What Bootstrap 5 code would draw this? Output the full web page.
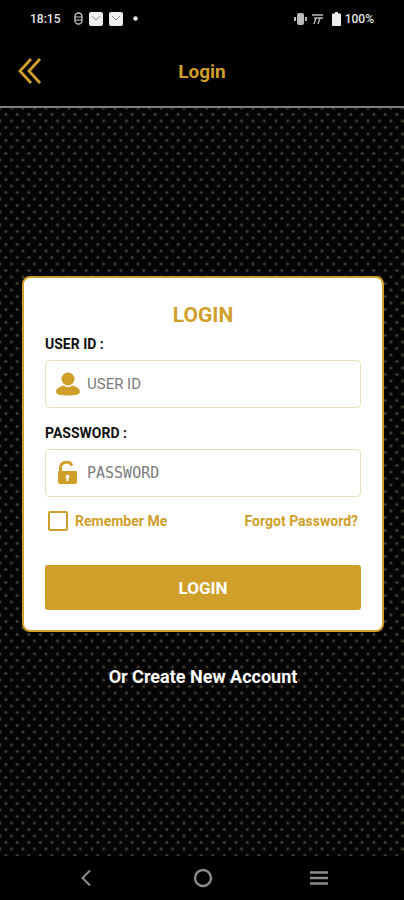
<!DOCTYPE html>
<html lang="en">
<head>
    <meta charset="UTF-8">
    <meta name="viewport" content="width=device-width, initial-scale=1.0">
    <title>Login</title>
    <link href="https://cdn.jsdelivr.net/npm/bootstrap@5.3.0/dist/css/bootstrap.min.css" rel="stylesheet">
    <style>
        body {
            background-color: #000;
            font-family: Roboto, "Liberation Sans", sans-serif;
            height: 900px;
            overflow: hidden;
        }
        .status-row {
            height: 36px;
            padding: 1px 30px 0 30px;
            color: #e6e6e6;
            font-size: 12px;
            font-weight: 500;
        }
        .status-left {
            gap: 6px;
        }
        .top-bar {
            height: 70px;
            padding: 2px 18px 0 18px;
        }
        .top-bar h1 {
            color: #d09f2a;
            font-size: 19px;
            font-weight: 700;
            margin: 0;
        }
        .back-arrow {
            left: 17px;
        }
        .top-line {
            height: 2px;
            background-color: #7d7d7d;
        }
        .dot-area {
            height: 748px;
            background-color: #040404;
            background-image:
                radial-gradient(circle, #5c5540 0, #37332a 1px, transparent 2.2px),
                radial-gradient(circle, #5c5540 0, #37332a 1px, transparent 2.2px);
            background-size: 11.5px 13px;
            background-position: 0 0, 5.75px 6.5px;
            padding: 168px 20px 0 22px;
        }
        .login-box {
            height: 356px;
            background-color: #fff;
            border: 2px solid #d09f2a;
            border-radius: 8px;
            padding: 25px 21px 0 21px;
        }
        .login-box h2 {
            color: #d09f2a;
            font-size: 21px;
            font-weight: 700;
            line-height: 24px;
            margin: 0 0 9px 0;
        }
        .field-label {
            color: #111;
            font-size: 14px;
            font-weight: 700;
            line-height: 16px;
            margin-bottom: 8px;
            display: block;
        }
        .field-wrap {
            height: 48px;
            border: 1.5px solid #eadfba;
            border-radius: 4px;
            padding-left: 10px;
            margin-bottom: 17px;
            gap: 7px;
        }
        .field-wrap.last-field {
            margin-bottom: 14px;
        }
        .field-wrap input {
            border: 0;
            outline: 0;
            width: 100%;
            padding: 0;
            font-family: Roboto, "Liberation Sans", sans-serif;
            font-size: 15px;
            color: #555;
            background: transparent;
        }
        .field-wrap input[type="password"] {
            font-family: "DejaVu Sans Mono", "Liberation Mono", monospace;
            padding-top: 1px;
        }
        .field-wrap input::placeholder {
            color: #7b7b7b;
            opacity: 1;
        }
        .field-icon {
            width: 24px;
            flex: none;
        }
        .tick-box {
            width: 20px;
            height: 20px;
            border: 2px solid #d09f2a;
            border-radius: 2px;
            margin-left: 3px;
        }
        .remember-wrap {
            gap: 7px;
        }
        .gold-link {
            color: #d09f2a;
            font-size: 14px;
            font-weight: 700;
            line-height: 20px;
            text-decoration: none;
        }
        .check-row {
            height: 20px;
            margin-bottom: 34px;
            padding-right: 3px;
        }
        .btn-gold {
            display: block;
            width: 100%;
            height: 45px;
            padding-top: 3px;
            background-color: #d09f2a;
            border: 0;
            border-radius: 3px;
            color: #fff;
            font-size: 17px;
            font-weight: 700;
        }
        .create-link {
            display: block;
            color: #fff;
            font-size: 18px;
            font-weight: 700;
            line-height: 20px;
            margin-top: 35px;
            text-align: center;
            text-decoration: none;
        }
        .nav-row {
            height: 44px;
            padding: 0 75px 0 80px;
        }
    </style>
</head>
<body>
    <div class="status-row d-flex align-items-center justify-content-between">
        <div class="status-left d-flex align-items-center">
            <span class="me-2">18:15</span>
            <svg width="9" height="13" viewBox="0 0 9 13"><rect x="1" y="1" width="7" height="11" rx="3.5" fill="none" stroke="#ccc" stroke-width="1.3"/><path d="M1 5h7M1 8h7" stroke="#ccc"/></svg>
            <svg width="14" height="14" viewBox="0 0 14 14"><rect width="14" height="14" rx="2" fill="#eee"/><path d="M3 4l4 4 4-4" fill="none" stroke="#888"/></svg>
            <svg width="14" height="14" viewBox="0 0 14 14"><rect width="14" height="14" rx="2" fill="#eee"/><path d="M3 4l4 4 4-4" fill="none" stroke="#888"/></svg>
            <svg class="ms-1" width="5" height="5" viewBox="0 0 5 5"><circle cx="2.500" cy="2.500" r="2.200" fill="#eee"/></svg>
        </div>
        <div class="d-flex align-items-center gap-1">
            <svg width="13" height="12" viewBox="0 0 13 12"><rect x="3" y="0" width="7" height="12" rx="2" fill="#bbb"/><rect x="0" y="4" width="2" height="4" fill="#bbb"/><rect x="11" y="4" width="2" height="4" fill="#bbb"/></svg>
            <svg width="13" height="12" viewBox="0 0 13 12"><path d="M1 2h11M3 5h9M5 5l-2 6M9 5l-2 6" stroke="#bbb" stroke-width="1.400" fill="none"/></svg>
            <svg width="9" height="14" viewBox="0 0 9 14" class="ms-1"><path d="M3 0h3v1.500h2a1 1 0 0 1 1 1V13a1 1 0 0 1-1 1H1a1 1 0 0 1-1-1V2.500a1 1 0 0 1 1-1h2z" fill="#eee"/></svg>
            <span>100%</span>
        </div>
    </div>

    <div class="top-bar position-relative d-flex align-items-center justify-content-center">
        <svg class="back-arrow position-absolute top-50 translate-middle-y" width="25" height="28" viewBox="0 0 25 28" fill="none" stroke="#d09f2a" stroke-width="2.800"><path d="M14 2L3 14l11 12M23 2L12 14l11 12"/></svg>
        <h1>Login</h1>
    </div>
    <div class="top-line"></div>

    <div class="dot-area">
        <div class="login-box">
            <h2 class="text-center">LOGIN</h2>
            <label class="field-label" for="userId">USER ID :</label>
            <div class="field-wrap d-flex align-items-center">
                <svg class="field-icon" height="24" viewBox="0 0 24 24" fill="#d09f2a"><circle cx="12" cy="7" r="6.500"/><path d="M0 20c0-4 5-6 8-6.500 2 2 6 2 8 0 3 .5 8 2.500 8 6.500 0 2.500-5 3.500-12 3.500S0 22.500 0 20z"/></svg>
                <input id="userId" type="text" placeholder="USER ID">
            </div>
            <label class="field-label" for="userPass">PASSWORD :</label>
            <div class="field-wrap last-field d-flex align-items-center">
                <svg class="field-icon" height="24" viewBox="0 0 24 24"><path d="M4.500 11V7a6 6 0 0 1 11.500-2.300" fill="none" stroke="#d09f2a" stroke-width="3"/><path fill="#d09f2a" fill-rule="evenodd" d="M3 10h17a1 1 0 0 1 1 1v10a2 2 0 0 1-2 2H4a2 2 0 0 1-2-2V11a1 1 0 0 1 1-1zM11.500 13.500a2 2 0 0 0-1 3.700V20h2v-2.800a2 2 0 0 0-1-3.700z"/></svg>
                <input id="userPass" type="password" placeholder="PASSWORD">
            </div>
            <div class="check-row d-flex align-items-center justify-content-between">
                <div class="remember-wrap d-flex align-items-center">
                    <span class="tick-box"></span>
                    <span class="gold-link">Remember Me</span>
                </div>
                <a href="#" class="gold-link">Forgot Password?</a>
            </div>
            <button type="button" class="btn-gold">LOGIN</button>
        </div>
        <a href="#" class="create-link">Or Create New Account</a>
    </div>

    <div class="nav-row d-flex align-items-center justify-content-between">
        <svg width="16" height="18" viewBox="0 0 16 18" fill="none" stroke="#8c8c8c" stroke-width="2"><path d="M10 1.500L2.500 9l7.500 7.500"/></svg>
        <svg width="20" height="20" viewBox="0 0 20 20" fill="none" stroke="#8c8c8c" stroke-width="2.400"><circle cx="10" cy="10" r="8"/></svg>
        <svg width="20" height="16" viewBox="0 0 20 16" fill="none" stroke="#8c8c8c" stroke-width="2.400"><path d="M1 2.500h18M1 8h18M1 13.500h18"/></svg>
    </div>

    <script src="https://cdn.jsdelivr.net/npm/bootstrap@5.3.0/dist/js/bootstrap.bundle.min.js"></script>
</body>
</html>
